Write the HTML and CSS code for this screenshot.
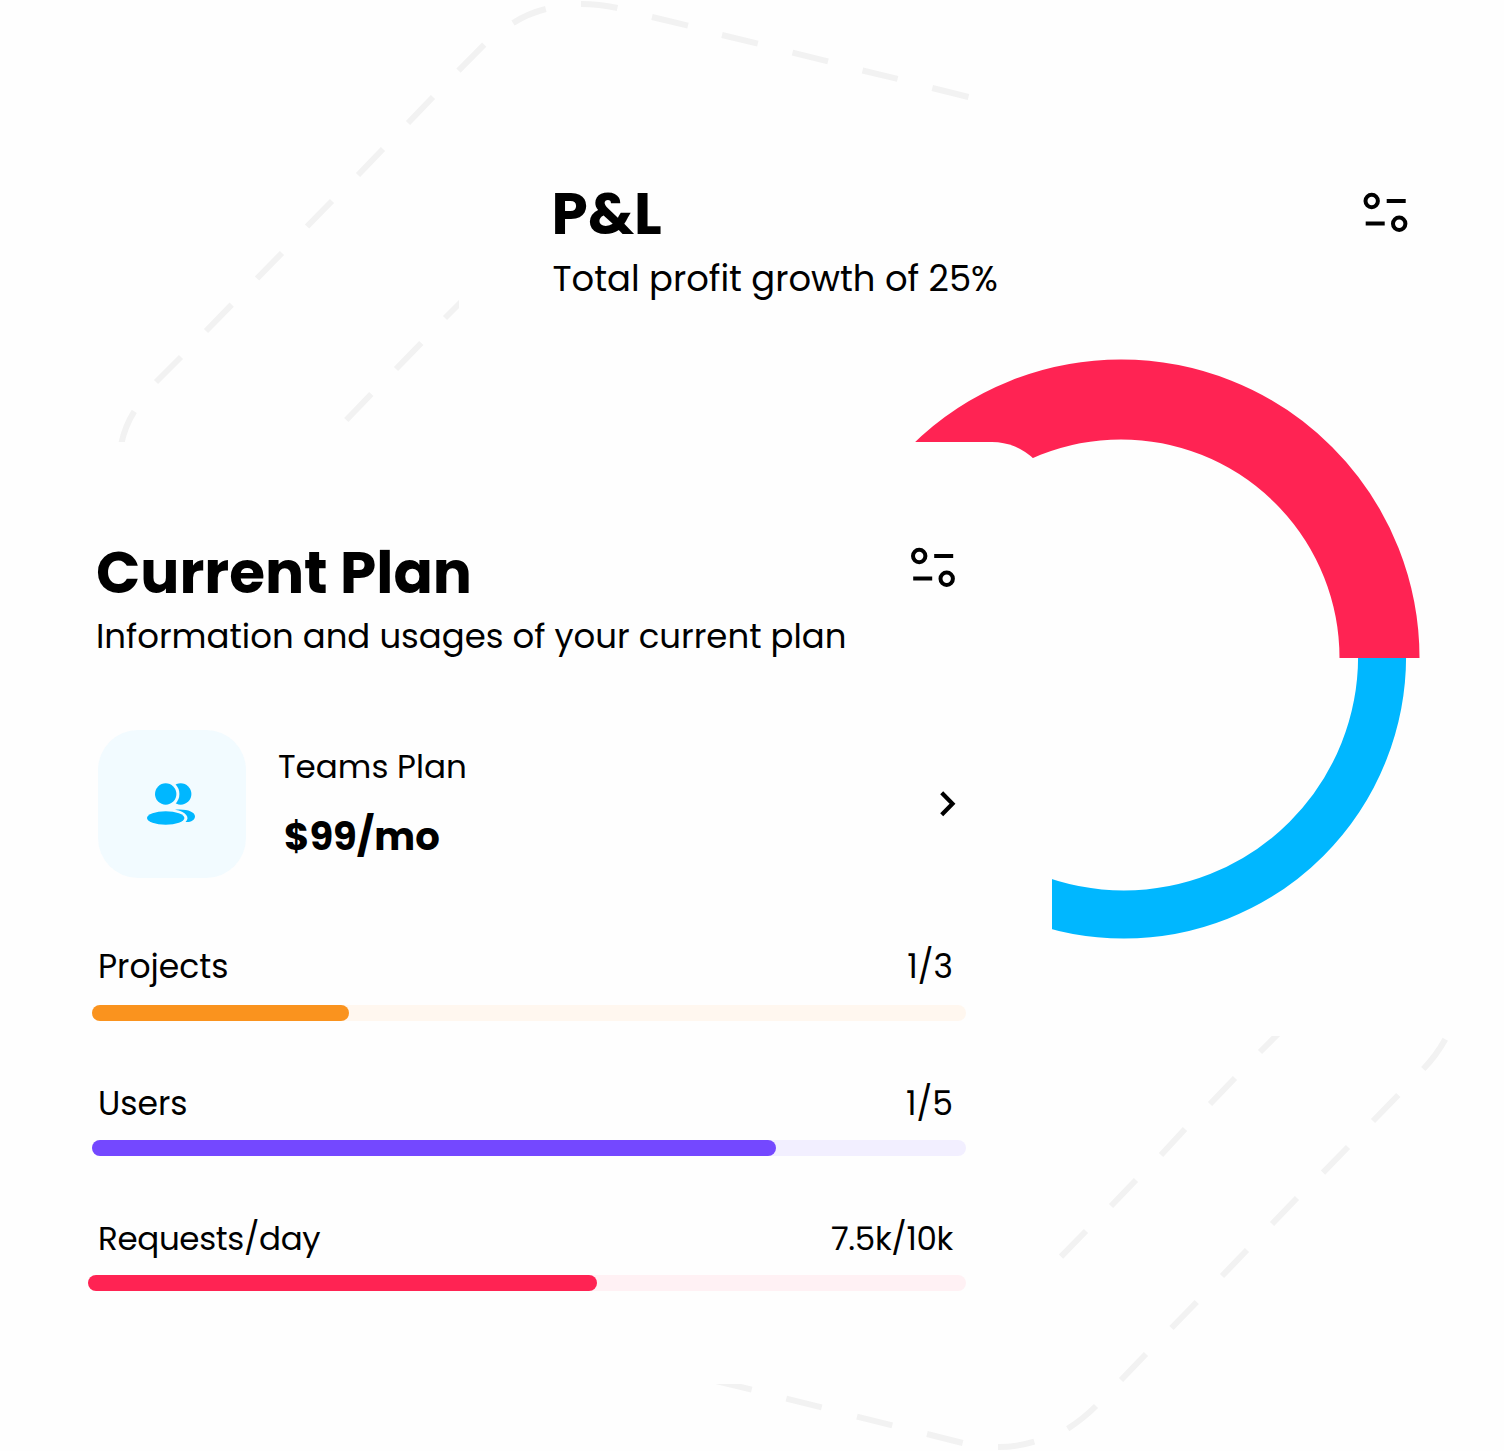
FILE: index.html
```html
<!DOCTYPE html>
<html lang="en">
<head>
<meta charset="utf-8">
<title>Current Plan</title>
<link rel="stylesheet" href="styles.css">
</head>
<body>
<svg class="backdrop" viewBox="0 0 1504 1451" aria-hidden="true">
  <path d="M581 4Q599 4 617.4 8M652 17L688 25.7M722 35L757.8 43.7M792.5 52.6L828 61.3M862.5 70.5L897.6 78.9M932.3 88L968.5 97
    M513 23Q528 13.500 545.8 9M458.500 70.700L484.200 44.700M408 123L433 97M358 175L383 149M307 226.500L332 201M257 278.500L282 253M206 331L231.700 304.700M156 382L181 357M134.300 411.300Q125 426 121.200 444
    M346.300 420L371.300 394M396 369L421.300 343M445 318L470 293
    M1445.300 1039.300Q1436 1056 1423.300 1069M1398.300 1095L1373 1121M1348 1147L1323 1172.700M1297 1198L1272 1224M1247 1250L1222 1276M1196.700 1302L1171.500 1328M1146 1354L1121 1380M1096 1406Q1083 1419 1067.700 1428.700M1034.300 1441.700Q1017 1447 998 1447M962.700 1443L927 1434M892.300 1425.300L857 1416.700M821.700 1407.300L786.300 1398.700M751.700 1389.700L712 1380
    M1285 1027L1260 1052M1235 1078L1210 1104M1185 1129L1161 1155M1136 1180L1111 1206M1086 1231L1061 1256.700"/>
</svg>
<main class="stage">
  <section class="card pnl">
    <header class="card-head">
      <div>
        <h2 class="title">P&amp;L</h2>
        <p class="subtitle subtitle-pnl">Total profit growth of 25%</p>
      </div>
      <svg class="sliders" viewBox="0 0 46 40"><circle cx="8.700" cy="9" r="6.200"/><path d="M23.700 9H42.700M2.700 31.600H21.700"/><circle cx="36.200" cy="31.700" r="6.200"/></svg>
    </header>
    <svg class="donut" viewBox="820 358 602 584">
      <path class="arc-blue" d="M1382.100 656.500A258.200 258.200 0 0 1 865.700 656.500"/>
      <path class="arc-red" d="M862.500 658A258.500 258.500 0 0 1 1379.500 658"/>
    </svg>
  </section>
  <section class="card plan">
    <header class="card-head">
      <div>
        <h2 class="title">Current Plan</h2>
        <p class="subtitle subtitle-plan">Information and usages of your current plan</p>
      </div>
      <svg class="sliders" viewBox="0 0 46 40"><circle cx="9.200" cy="9" r="6.200"/><path d="M24.200 9H43.200M3.200 31.600H22.200"/><circle cx="36.700" cy="31.700" r="6.200"/></svg>
    </header>
    <div class="tier">
      <div class="tile">
        <svg viewBox="0 0 148 148">
          <circle class="person" cx="82.700" cy="64" r="10.700"/>
          <circle class="gap" cx="67.700" cy="64" r="13.700"/>
          <circle class="person" cx="67.700" cy="64" r="10.700"/>
          <path class="person" d="M77 79.700C88 78.500 97 81.500 97 86.300C97 90.500 92.500 92.400 87.500 92C92.500 87.500 88 81.500 77 79.700Z"/>
          <ellipse class="person" cx="67.700" cy="88" rx="18.700" ry="6.800"/>
        </svg>
      </div>
      <div class="tier-text">
        <p class="tier-name">Teams Plan</p>
        <p class="tier-price">$99/mo</p>
      </div>
      <svg class="chevron" viewBox="0 0 20 28"><path d="M2.700 2.700L13.500 13.700L2.700 24.700"/></svg>
    </div>
    <div class="usage orange">
      <div class="usage-row"><span>Projects</span><span>1/3</span></div>
      <div class="track"><div class="fill"></div></div>
    </div>
    <div class="usage violet">
      <div class="usage-row"><span>Users</span><span>1/5</span></div>
      <div class="track"><div class="fill"></div></div>
    </div>
    <div class="usage red">
      <div class="usage-row"><span>Requests/day</span><span>7.5k/10k</span></div>
      <div class="track"><div class="fill"></div></div>
    </div>
  </section>
</main>
</body>
</html>
```
FILE: styles.css
```css
* { box-sizing: border-box; }

body {
  margin: 0;
  background: #fefefe;
  color: #000;
  font-family: Poppins, Inter, "Liberation Sans", sans-serif;
}

h2, p { margin: 0; white-space: nowrap; }
svg { display: block; flex: none; }

.backdrop {
  position: absolute;
  top: 0;
  left: 0;
  width: 1504px;
  height: 1451px;
  fill: none;
  stroke: #f2f2f2;
  stroke-width: 6;
}

/* The two cards share grid cells where they overlap. */
.stage {
  position: relative;
  display: grid;
  grid-template-columns: 459px 593px 452px;
  grid-template-rows: 100px 342px 594px 348px 67px;
  width: 1504px;
  height: 1451px;
  overflow: hidden;
}

.card { background: #fefefe; min-width: 0; min-height: 0; }
.pnl { grid-column: 2 / 4; grid-row: 2 / 4; padding: 78px 0 0 93.500px; border-radius: 60px 0 0 0; }
.plan { grid-column: 1 / 3; grid-row: 3 / 5; padding: 95px 0 0; border-radius: 0 60px 60px 0; }

.card-head { display: flex; justify-content: space-between; }
.pnl .card-head { height: 180px; padding-right: 95px; }
.plan .card-head { height: 193px; padding: 0 96px 0 96px; }

.title { font-weight: 700; font-size: 58.100px; line-height: 71px; }
.pnl .title { margin-left: -1px; }
.subtitle { line-height: 50px; margin-top: 3px; }
.subtitle-pnl { font-size: 35.350px; margin-top: 4.500px; }
.subtitle-plan { font-size: 33.950px; }

.sliders {
  width: 46px;
  height: 40px;
  margin-top: 14px;
  fill: none;
  stroke: #000;
  stroke-width: 4;
}
.plan .sliders { margin-top: 9.700px; }

.donut { width: 602px; height: 584px; margin-left: 267.500px; fill: none; }
.arc-red { stroke: #ff2353; stroke-width: 80; }
.arc-blue { stroke: #00b7ff; stroke-width: 48; }

.tier { display: flex; align-items: center; height: 148px; padding: 0 93px 0 98px; }
.tile { width: 148px; height: 148px; border-radius: 40px; background: #f2fbff; }
.person { fill: #00b7ff; }
.gap { fill: #f2fbff; }
.tier-text { flex: 1; height: 148px; padding: 16.500px 0 0 32px; }
.tier-name { font-size: 32.600px; line-height: 40px; }
.tier-price { margin: 25.500px 0 0 6px; font-size: 38.600px; font-weight: 700; line-height: 50px; }
.chevron { width: 20px; height: 28px; fill: none; stroke: #000; stroke-width: 4.200; }

.usage { padding: 0 86px 0 92px; height: 135px; }
.orange { margin-top: 68px; height: 137px; }
.usage-row {
  display: flex;
  justify-content: space-between;
  height: 58.500px;
  padding: 0.500px 13px 0 6px;
  font-size: 33px;
  line-height: 40px;
}
.violet .usage-row { height: 57px; }
.red .usage-row { height: 57.400px; padding-top: 1px; font-size: 32.500px; letter-spacing: -0.330px; }
.track { height: 16px; border-radius: 8px; }
.fill { height: 16px; border-radius: 8px; }
.orange .track { background: #fff7ef; }
.orange .fill { width: 257px; background: #fa931e; }
.violet .track { background: #f2efff; }
.violet .fill { width: 683.500px; background: #7448ff; }
.red .track { background: #fff1f4; }
.red .fill { width: 509.500px; margin-left: -4.500px; background: #ff2353; }
```
